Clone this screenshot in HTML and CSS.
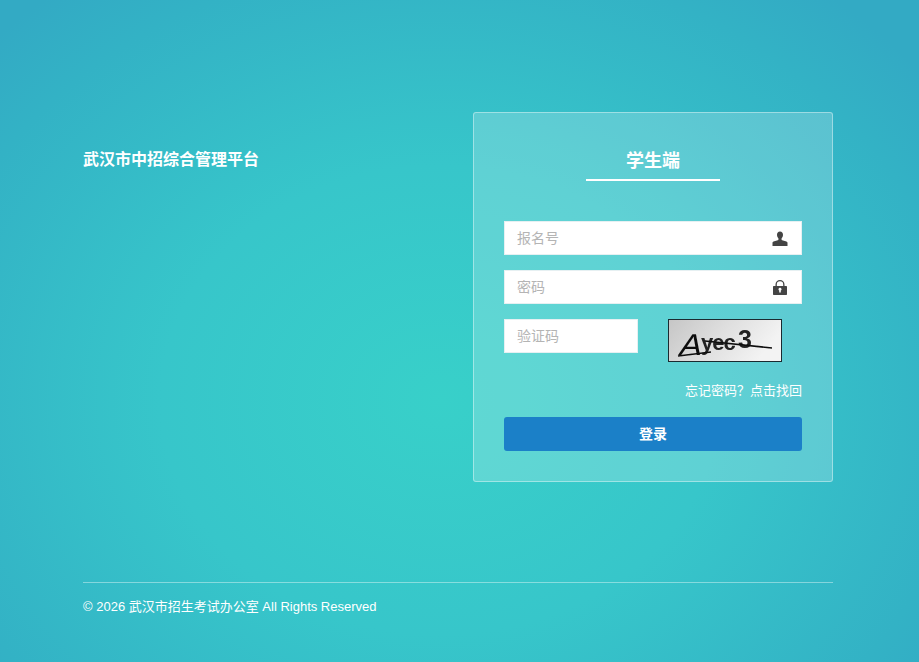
FILE: index.html
```html
<!DOCTYPE html>
<html lang="zh-CN">
<head>
  <meta charset="UTF-8">
  <meta name="viewport" content="width=device-width, initial-scale=1.0">
  <title>武汉市中招综合管理平台</title>
  <link rel="stylesheet" href="styles.css">
</head>
<body>

  <div class="wrap">
    <div class="main">
      <div class="site-name">武汉市中招综合管理平台</div>

      <div class="panel">
        <div class="panel-title"><span>学生端</span></div>

        <div class="field">
          <input type="text" placeholder="报名号">
          <svg class="field-icon" viewBox="0 0 16 16">
            <path d="M8 1.500c-1.900 0-3 1.400-3 3.300 0 1.400.5 2.700 1.400 3.400v1.800c-1.500.7-5.100 1-5.900 2.600V16h15v-3.400c-.8-1.600-4.400-1.900-5.900-2.600V8.200c.9-.7 1.400-2 1.400-3.400 0-1.900-1.100-3.300-3-3.300z"/>
          </svg>
        </div>

        <div class="field">
          <input type="password" placeholder="密码">
          <svg class="field-icon" viewBox="0 0 16 16">
            <path fill-rule="evenodd" d="M3.500 7V5.500a4.500 4.500 0 0 1 9 0V7h1.800a.7.7 0 0 1 .7.700v7.600a.7.7 0 0 1-.7.700H1.700a.7.7 0 0 1-.7-.700V7.700A.7.7 0 0 1 1.700 7zm1.300 0h6.400V5.500a3.200 3.200 0 0 0-6.400 0zM8 8.800a1.500 1.500 0 0 0-.8 2.800v2h1.600v-2A1.500 1.500 0 0 0 8 8.800z"/>
          </svg>
        </div>

        <div class="code-row">
          <input class="code-input" type="text" placeholder="验证码">
          <svg class="captcha" viewBox="0 0 112 41">
            <defs>
              <linearGradient id="captchaBg" x1="0" y1="0" x2="1" y2="0.3">
                <stop offset="0" stop-color="#c6c6c6"/>
                <stop offset="0.5" stop-color="#dedede"/>
                <stop offset="1" stop-color="#f3f3f3"/>
              </linearGradient>
              <filter id="captchaInk"><feGaussianBlur stdDeviation="0.4"/></filter>
            </defs>
            <rect width="112" height="41" fill="url(#captchaBg)"/>
            <g filter="url(#captchaInk)">
              <text transform="translate(9 35) skewX(-14) scale(1.100 1)" class="captcha-a">A</text>
              <text x="32" y="30" class="captcha-text">yec</text>
              <text x="69" y="28" class="captcha-three">3</text>
              <path d="M9 36 L42 32 M36 21 L103 28" stroke="#111" stroke-width="1.500" fill="none"/>
            </g>
          </svg>
        </div>

        <div class="forgot"><a href="#">忘记密码？点击找回</a></div>

        <button class="btn-login">登录</button>
      </div>
    </div>

    <div class="footer">© 2026 武汉市招生考试办公室 All Rights Reserved</div>
  </div>

</body>
</html>
```

FILE: styles.css
```css
html, body {
  height: 100%;
}

body {
  margin: 0;
  font-family: "Liberation Sans", Arial, "Noto Sans CJK SC", sans-serif;
  color: #fff;
  background: radial-gradient(ellipse 620px 520px at 440px 400px, #38d0c9 0%, #37c6ca 45%, #33b2c5 85%, #33aac4 100%);
  background-color: #33aac4;
}

.wrap {
  width: 750px;
  margin: 0 0 0 83px;
  padding-top: 112px;
}

.main {
  display: flex;
  justify-content: space-between;
  align-items: flex-start;
}

.site-name {
  margin-top: 38px;
  font-size: 16px;
  line-height: 20px;
  font-weight: bold;
}

.panel {
  box-sizing: border-box;
  width: 360px;
  height: 370px;
  padding: 0 30px;
  background: rgba(255, 255, 255, 0.2);
  border: 1px solid rgba(255, 255, 255, 0.4);
  border-radius: 3px;
}

.panel-title {
  width: 134px;
  height: 36px;
  margin: 30px auto 40px;
  border-bottom: 2px solid #fff;
  text-align: center;
  font-size: 18px;
  line-height: 36px;
  font-weight: bold;
}

.field {
  position: relative;
  margin-bottom: 15px;
}

input {
  display: block;
  box-sizing: border-box;
  width: 100%;
  height: 34px;
  padding: 0 12px;
  border: 1px solid #e6f0f2;
  outline: none;
  background: #fff;
  font-family: inherit;
  font-size: 14px;
  color: #333;
}

input::placeholder {
  color: #b4b4b4;
}

.field-icon {
  position: absolute;
  top: 9px;
  right: 14px;
  width: 16px;
  height: 16px;
  fill: #444;
}

.code-row {
  display: flex;
  justify-content: space-between;
  align-items: flex-start;
}

.code-input {
  width: 134px;
}

.captcha {
  box-sizing: border-box;
  width: 114px;
  height: 43px;
  margin-right: 20px;
  border: 1px solid #1a2a30;
}

.captcha-a {
  font-size: 30px;
  fill: #111;
}

.captcha-text {
  font-size: 22px;
  font-weight: bold;
  letter-spacing: -1px;
  fill: #222;
}

.captcha-three {
  font-size: 25px;
  font-weight: bold;
  fill: #222;
}

.forgot {
  margin-top: 20px;
  text-align: right;
  font-size: 13px;
  line-height: 18px;
}

.forgot a {
  color: #fff;
  text-decoration: none;
}

.btn-login {
  display: block;
  width: 100%;
  height: 34px;
  margin-top: 17px;
  padding: 0 0 3px;
  border: none;
  border-radius: 3px;
  background: #1b80c8;
  color: #fff;
  font-family: inherit;
  font-size: 14px;
  font-weight: bold;
}

.footer {
  margin-top: 100px;
  padding-top: 15px;
  border-top: 1px solid rgba(255, 255, 255, 0.4);
  font-size: 13px;
  line-height: 18px;
}
```
